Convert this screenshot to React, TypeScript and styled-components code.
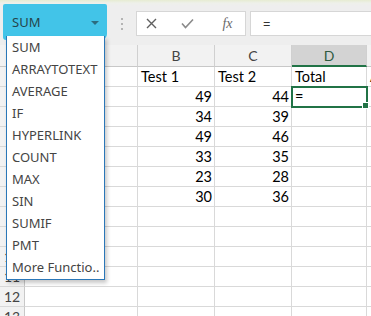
import React from "react";
import styled, { createGlobalStyle } from "styled-components";

const Global = createGlobalStyle`
  html, body { margin: 0; padding: 0; background: #fff; }
  body { overflow: hidden; }
`;

const Root = styled.div`
  position: relative;
  width: 371px;
  height: 316px;
  overflow: hidden;
  background: #fff;
  font-family: Lato, "Liberation Sans", sans-serif;
`;

const TopBar = styled.div`
  height: 45px;
  display: flex;
  align-items: flex-start;
  background: linear-gradient(#e6ecd2 0px, #eef0ea 3px, #eeeeee 6px);
  box-sizing: border-box;
`;

const NameBox = styled.div`
  margin: 4px 0 0 3px;
  width: 104px;
  height: 36px;
  background: #42c4e8;
  border-radius: 2px 2px 6px 3px;
  display: flex;
  align-items: center;
  justify-content: space-between;
  padding: 0 8px 0 9px;
  box-sizing: border-box;
  font-family: "Noto Sans", "Open Sans", sans-serif;
  font-size: 13px;
  color: #26444c;
`;

const Arrow = styled.span`
  width: 0;
  height: 0;
  border-left: 4px solid transparent;
  border-right: 4px solid transparent;
  border-top: 4px solid #2c6d80;
  margin-top: 1px;
`;

const Dots = styled.div`
  margin: 18px 0 0 14px;
  display: flex;
  flex-direction: column;
  gap: 3px;
  & > span {
    width: 2px;
    height: 2px;
    background: #b4b4b4;
    display: block;
  }
`;

const FxBox = styled.div`
  margin: 11px 0 0 13px;
  width: 110px;
  height: 25px;
  background: #fff;
  border: 1px solid #d6d6d6;
  box-sizing: border-box;
  display: flex;
  align-items: center;
`;

const FxSlot = styled.div<{ $w: number }>`
  width: ${(p) => p.$w}px;
  display: flex;
  justify-content: center;
  align-items: center;
`;

const FxText = styled.span`
  font-family: "Liberation Serif", serif;
  font-style: italic;
  font-size: 14px;
  color: #6a6a6a;
`;

const FormulaInput = styled.div`
  margin: 11px 0 0 4px;
  flex: 1;
  height: 25px;
  background: #fff;
  border: 1px solid #d6d6d6;
  border-right: none;
  box-sizing: border-box;
  display: flex;
  align-items: center;
  padding-left: 12px;
  font-family: "Noto Sans", sans-serif;
  font-size: 13px;
  color: #333;
`;

const Grid = styled.div`
  display: grid;
  grid-template-columns: 25px 113px 77px 77px 75px 120px;
  grid-template-rows: 22px;
  grid-auto-rows: 20px;
`;

const HeadCell = styled.div<{ $active?: boolean }>`
  background: ${(p) => (p.$active ? "#d3d3d3" : "#f2f2f2")};
  border-right: 1px solid #d0d0d0;
  border-bottom: ${(p) => (p.$active ? "2px solid #217346" : "1px solid #c8c8c8")};
  box-sizing: border-box;
  display: flex;
  align-items: center;
  justify-content: center;
  font-size: 14px;
  color: ${(p) => (p.$active ? "#2f5a40" : "#444")};
`;

const RowHead = styled.div`
  background: #f2f2f2;
  border-right: 1px solid #c8c8c8;
  border-bottom: 1px solid #d8d8d8;
  box-sizing: border-box;
  display: flex;
  align-items: center;
  justify-content: center;
  font-size: 14px;
  color: #444;
`;

const Cell = styled.div<{ $num?: boolean; $sel?: boolean }>`
  position: relative;
  border-right: 1px solid #d9d9d9;
  border-bottom: 1px solid #d9d9d9;
  box-sizing: border-box;
  display: flex;
  align-items: center;
  justify-content: ${(p) => (p.$num ? "flex-end" : "flex-start")};
  padding: ${(p) => (p.$num ? "0 2px 0 0" : "0 0 0 3px")};
  font-size: 14.5px;
  color: #000;
  white-space: nowrap;
  overflow: hidden;
  ${(p) =>
    p.$sel &&
    `
    overflow: visible;
    outline: 2px solid #217346;
    outline-offset: -1px;
    z-index: 1;
    &::after {
      content: "";
      position: absolute;
      right: -3px;
      bottom: -3px;
      width: 5px;
      height: 5px;
      background: #217346;
      border: 1px solid #fff;
    }
  `}
`;

const Dropdown = styled.div`
  position: absolute;
  left: 6px;
  top: 36px;
  width: 99px;
  background: #fff;
  border: 1px solid #2a77b8;
  border-top: none;
  box-sizing: border-box;
  box-shadow: 2px 3px 4px rgba(0, 0, 0, 0.22);
  z-index: 5;
  padding-bottom: 1px;
`;

const Item = styled.div`
  height: 22px;
  display: flex;
  align-items: center;
  padding-left: 5px;
  font-family: "Noto Sans", "Open Sans", sans-serif;
  font-size: 13px;
  color: #444;
  white-space: nowrap;
  overflow: hidden;
`;

const items = [
  "SUM",
  "ARRAYTOTEXT",
  "AVERAGE",
  "IF",
  "HYPERLINK",
  "COUNT",
  "MAX",
  "SIN",
  "SUMIF",
  "PMT",
  "More Functio..",
];

const data: number[][] = [
  [49, 44],
  [34, 39],
  [49, 46],
  [33, 35],
  [23, 28],
  [30, 36],
];

export default function App() {
  const rows = [];
  for (let r = 1; r <= 13; r++) {
    const d = r >= 2 && r <= 7 ? data[r - 2] : null;
    rows.push(
      <React.Fragment key={r}>
        <RowHead>{r}</RowHead>
        <Cell />
        {r === 1 ? (
          <>
            <Cell>Test 1</Cell>
            <Cell>Test 2</Cell>
            <Cell>Total</Cell>
            <Cell>Average</Cell>
          </>
        ) : (
          <>
            <Cell $num>{d ? d[0] : ""}</Cell>
            <Cell $num>{d ? d[1] : ""}</Cell>
            <Cell $sel={r === 2}>{r === 2 ? "=" : ""}</Cell>
            <Cell />
          </>
        )}
      </React.Fragment>
    );
  }

  return (
    <Root>
      <Global />
      <TopBar>
        <NameBox>
          <span>SUM</span>
          <Arrow />
        </NameBox>
        <Dots>
          <span />
          <span />
          <span />
        </Dots>
        <FxBox>
          <FxSlot $w={28}>
            <svg width="11" height="11" viewBox="0 0 11 11">
              <path d="M1 1L10 10M10 1L1 10" stroke="#606060" strokeWidth="1.4" />
            </svg>
          </FxSlot>
          <FxSlot $w={45}>
            <svg width="13" height="11" viewBox="0 0 13 11">
              <path d="M1 5.5L4.5 9.5L12 1.5" stroke="#8a8a8a" strokeWidth="1.6" fill="none" />
            </svg>
          </FxSlot>
          <FxSlot $w={35}>
            <FxText>fx</FxText>
          </FxSlot>
        </FxBox>
        <FormulaInput>=</FormulaInput>
      </TopBar>
      <Grid>
        <HeadCell />
        <HeadCell>A</HeadCell>
        <HeadCell>B</HeadCell>
        <HeadCell>C</HeadCell>
        <HeadCell $active>D</HeadCell>
        <HeadCell>E</HeadCell>
        {rows}
      </Grid>
      <Dropdown>
        {items.map((it) => (
          <Item key={it}>{it}</Item>
        ))}
      </Dropdown>
    </Root>
  );
}
